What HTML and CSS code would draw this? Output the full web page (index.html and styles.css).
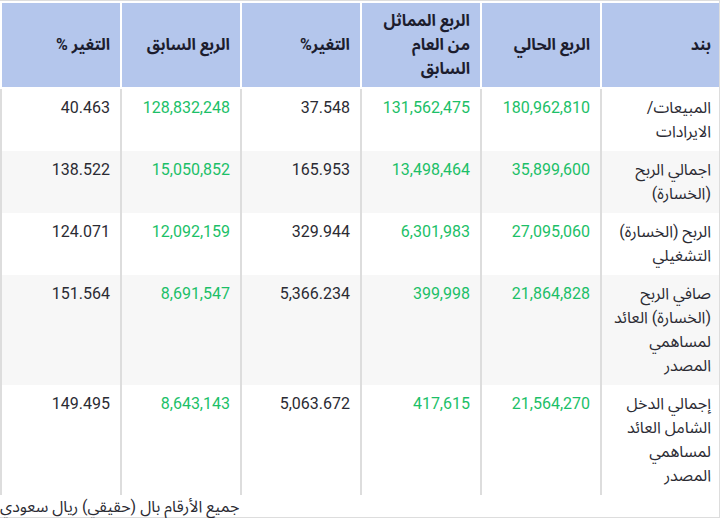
FILE: index.html
```html
<!DOCTYPE html>
<html lang="ar" dir="rtl">
<head>
<meta charset="utf-8">
<title>النتائج المالية</title>
<link rel="stylesheet" href="styles.css">
</head>
<body>
<div class="panel">
  <table class="fin-table">
    <thead>
      <tr>
        <th class="c-first">بند</th>
        <th class="c-col">الربع الحالي</th>
        <th class="c-col">الربع المماثل من العام السابق</th>
        <th class="c-col">التغير%</th>
        <th class="c-col">الربع السابق</th>
        <th class="c-col">التغير %</th>
      </tr>
    </thead>
    <tbody>
      <tr>
        <td class="label">المبيعات/ الايرادات</td>
        <td class="num pos">180,962,810</td>
        <td class="num pos">131,562,475</td>
        <td class="num">37.548</td>
        <td class="num pos">128,832,248</td>
        <td class="num">40.463</td>
      </tr>
      <tr class="alt">
        <td class="label">اجمالي الربح (الخسارة)</td>
        <td class="num pos">35,899,600</td>
        <td class="num pos">13,498,464</td>
        <td class="num">165.953</td>
        <td class="num pos">15,050,852</td>
        <td class="num">138.522</td>
      </tr>
      <tr>
        <td class="label">الربح (الخسارة) التشغيلي</td>
        <td class="num pos">27,095,060</td>
        <td class="num pos">6,301,983</td>
        <td class="num">329.944</td>
        <td class="num pos">12,092,159</td>
        <td class="num">124.071</td>
      </tr>
      <tr class="alt">
        <td class="label">صافي الربح (الخسارة) العائد لمساهمي المصدر</td>
        <td class="num pos">21,864,828</td>
        <td class="num pos">399,998</td>
        <td class="num">5,366.234</td>
        <td class="num pos">8,691,547</td>
        <td class="num">151.564</td>
      </tr>
      <tr>
        <td class="label">إجمالي الدخل الشامل العائد لمساهمي المصدر</td>
        <td class="num pos">21,564,270</td>
        <td class="num pos">417,615</td>
        <td class="num">5,063.672</td>
        <td class="num pos">8,643,143</td>
        <td class="num">149.495</td>
      </tr>
    </tbody>
  </table>
  <div class="note">جميع الأرقام بال (حقيقي) ريال سعودي</div>
</div>
</body>
</html>
```

FILE: styles.css
```css
html, body {
  margin: 0;
  padding: 0;
  background: #ffffff;
}

body {
  font-family: Roboto, "Noto Sans Arabic", "DejaVu Sans", sans-serif;
  font-size: 16px;
  line-height: 1.5;
  color: #333333;
}

.panel {
  width: 719px;
  margin: 0 auto 0 0;
  border-top: 1px solid #dddddd;
  border-right: 1px solid #dddddd;
  border-bottom: 1px solid #dddddd;
}

.fin-table {
  width: 719px;
  table-layout: fixed;
  border-collapse: separate;
  border-spacing: 0;
}

.fin-table th,
.fin-table td {
  box-sizing: border-box;
}

.c-first {
  width: 119px;
}

.c-col {
  width: 120px;
}

.fin-table th {
  background: #b4c6ec;
  color: #1c1d2e;
  font-weight: bold;
  text-align: right;
  vertical-align: middle;
  padding: 6px 10px 6px 8px;
  border-top: 2px solid #ffffff;
  border-bottom: 2px solid #ffffff;
  border-left: 2px solid #ffffff;
}

.fin-table th.c-first {
  padding-right: 8px;
}

.fin-table td {
  text-align: right;
  vertical-align: top;
  padding: 7px 10px 7px 8px;
  border-left: 2px solid #dddddd;
  color: #2b2b33;
}

.fin-table td.label {
  padding-right: 8px;
}

.fin-table tr.alt td {
  background: #f7f7f7;
}

.fin-table td.pos {
  color: #1cbf68;
}

.note {
  text-align: left;
  line-height: 21px;
  margin-top: 1px;
  color: #2b2b33;
}
```
